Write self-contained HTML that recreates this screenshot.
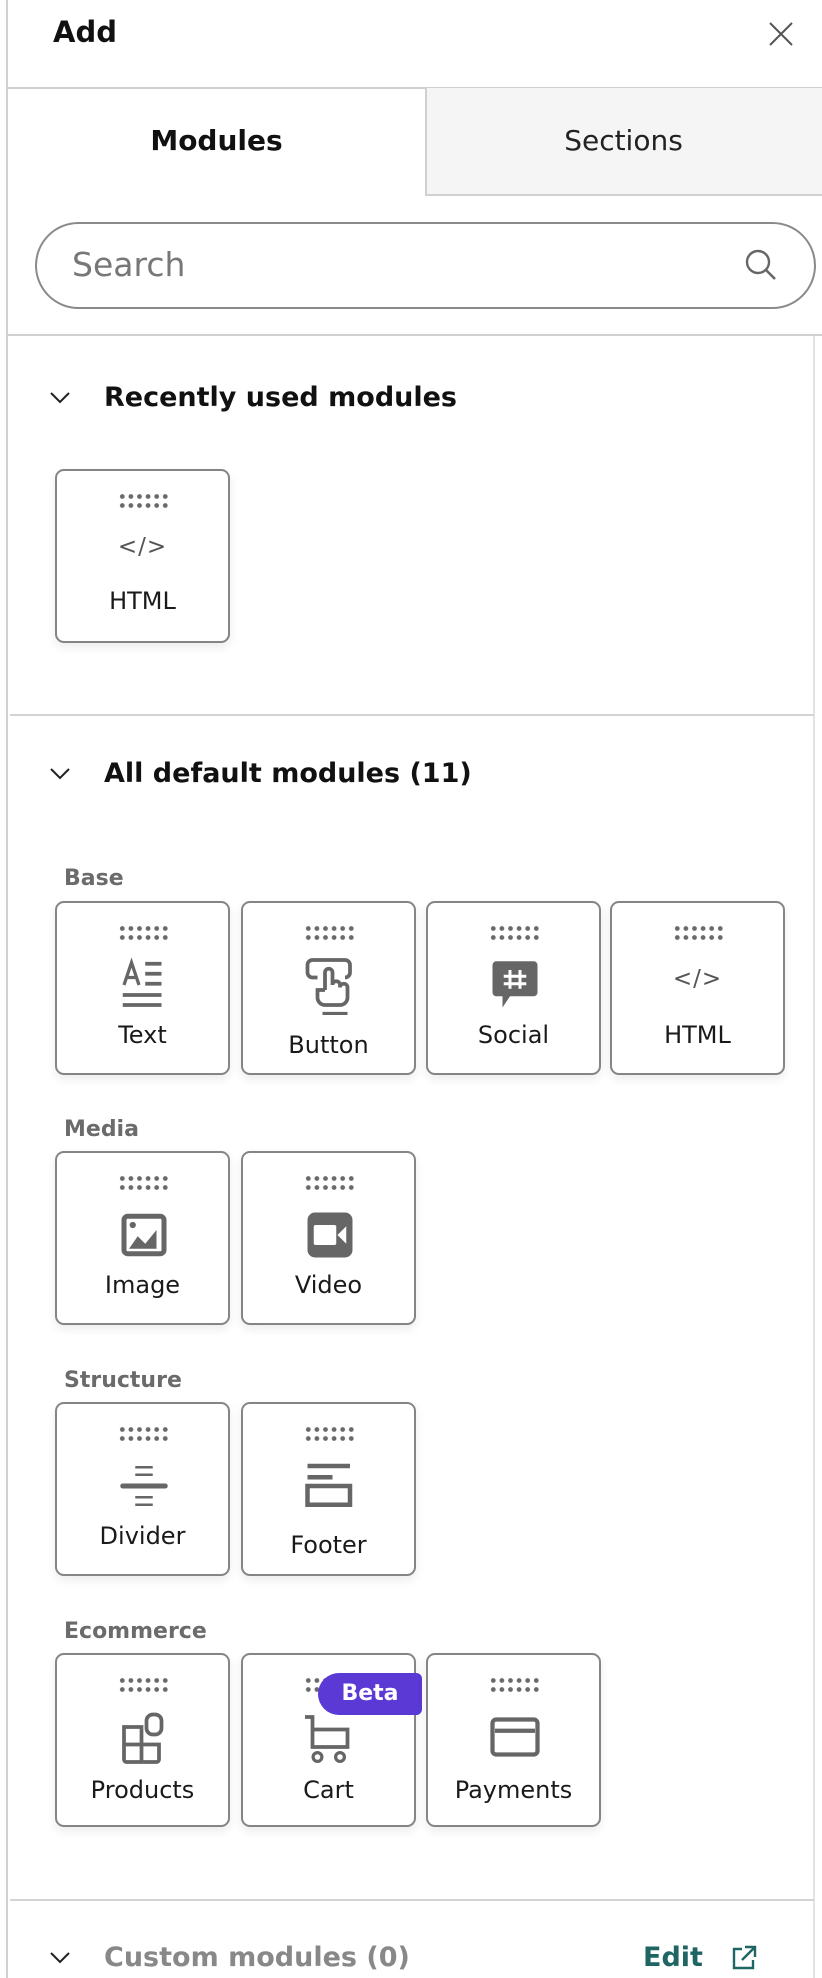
<!DOCTYPE html>
<html><head><meta charset="utf-8"><style>
*{margin:0;padding:0;box-sizing:border-box}
body{width:822px;height:1978px;background:#fff;font-family:"DejaVu Sans","Liberation Sans",sans-serif;position:relative;overflow:hidden;color:#111}
.a{position:absolute}
.card{position:absolute;width:175px;height:174px;border:2px solid #858585;border-radius:9px;background:#fff;box-shadow:0 4px 10px rgba(0,0,0,0.08)}
.dots{position:absolute;left:61px;top:21px;width:52px;height:18px;background-image:radial-gradient(circle,#6a6a6a 2.1px,transparent 2.6px);background-size:8.6px 9px}
.lbl{position:absolute;left:0;right:0;text-align:center;font-size:24px;color:#1a1a1a;line-height:28px}
.ic{position:absolute;left:57px;top:52px;width:60px;height:60px}
.sub{position:absolute;left:64px;font-size:22px;font-weight:bold;color:#6b6b6b}
.hd{position:absolute;left:104px;font-size:27px;font-weight:bold;color:#111}
.chev{position:absolute;left:49px;width:22px;height:14px}
.hr{position:absolute;left:10px;width:804px;height:2px;background:#d3d3d3}
.code{position:absolute;left:0;right:0;top:63px;text-align:center;font-size:23px;color:#555;letter-spacing:1px}
</style></head><body>
<div class="a" style="left:6px;top:0;width:2px;height:1978px;background:#d0d0d0"></div>
<div class="a" style="left:53px;top:15px;font-size:29px;font-weight:bold">Add</div>
<svg class="a" style="left:768px;top:21px" width="26" height="26" viewBox="0 0 26 26"><path d="M2 2L24 24M24 2L2 24" stroke="#555" stroke-width="2"/></svg>
<div class="a" style="left:8px;top:87px;width:814px;height:2px;background:#d0d0d0"></div>
<div class="a" style="left:425px;top:88px;width:397px;height:108px;background:#f5f5f5;border-left:2px solid #d0d0d0;border-bottom:2px solid #d0d0d0"></div>
<div class="a" style="left:8px;top:124px;width:417px;text-align:center;font-size:28px;font-weight:bold">Modules</div>
<div class="a" style="left:425px;top:124px;width:397px;text-align:center;font-size:28px;color:#222">Sections</div>
<div class="a" style="left:35px;top:222px;width:781px;height:87px;border:2px solid #8a8a8a;border-radius:44px"></div>
<div class="a" style="left:72px;top:245px;font-size:33px;color:#777">Search</div>
<svg class="a" style="left:744px;top:248px" width="34" height="34" viewBox="0 0 34 34"><circle cx="14" cy="14" r="11" fill="none" stroke="#666" stroke-width="2.4"/><path d="M22 22L31 31" stroke="#666" stroke-width="2.6"/></svg>
<div class="a" style="left:8px;top:334px;width:814px;height:2px;background:#d0d0d0"></div>
<div class="a" style="left:813px;top:336px;width:2px;height:1642px;background:#e4e4e4"></div>

<svg class="chev" style="top:391px" viewBox="0 0 22 14"><path d="M2 2L11 11L20 2" fill="none" stroke="#222" stroke-width="2"/></svg>
<div class="hd" style="top:382px">Recently used modules</div>
<div class="card" style="left:55px;top:469px"><div class="dots"></div><div class="code">&lt;/&gt;</div><div class="lbl" style="top:116px">HTML</div></div>

<div class="hr" style="top:714px"></div>
<svg class="chev" style="top:767px" viewBox="0 0 22 14"><path d="M2 2L11 11L20 2" fill="none" stroke="#222" stroke-width="2"/></svg>
<div class="hd" style="top:758px">All default modules (11)</div>

<div class="sub" style="top:866px">Base</div>
<div class="card" style="left:55px;top:901px"><div class="dots"></div>
<svg class="ic" viewBox="0 0 48 48"><path d="M8 24L14 6L20 24M10.5 18H17.5" fill="none" stroke="#666" stroke-width="2.6"/><path d="M25 7H38M25 15H38M25 23H38M7 32H38M7 40H38" stroke="#666" stroke-width="3"/></svg>
<div class="lbl" style="top:118px">Text</div></div>
<div class="card" style="left:241px;top:901px"><div class="dots"></div>
<svg class="ic" viewBox="0 0 48 48"><path d="M14 18H10a4 4 0 0 1-4-4V8a4 4 0 0 1 4-4h26a4 4 0 0 1 4 4v6a4 4 0 0 1-4 4" fill="none" stroke="#666" stroke-width="3"/><path d="M20 28V14a3 3 0 0 1 6 0v10a3 3 0 0 1 6 0v2a3 3 0 0 1 6 0v8a6 6 0 0 1-6 6H20a6 6 0 0 1-6-6v-6h6" fill="none" stroke="#666" stroke-width="3"/><path d="M18 47H38" stroke="#666" stroke-width="3"/></svg>
<div class="lbl" style="top:128px">Button</div></div>
<div class="card" style="left:426px;top:901px"><div class="dots"></div>
<svg class="ic" viewBox="0 0 48 48"><path d="M6 8a3 3 0 0 1 3-3h30a3 3 0 0 1 3 3v22a3 3 0 0 1-3 3H20l-6 9V33H9a3 3 0 0 1-3-3z" fill="#666"/><path d="M20 12V27M28 12V27M15 17H33M15 23H33" stroke="#fff" stroke-width="2.4"/></svg>
<div class="lbl" style="top:118px">Social</div></div>
<div class="card" style="left:610px;top:901px"><div class="dots"></div><div class="code">&lt;/&gt;</div><div class="lbl" style="top:118px">HTML</div></div>

<div class="sub" style="top:1117px">Media</div>
<div class="card" style="left:55px;top:1151px"><div class="dots"></div>
<svg class="ic" viewBox="0 0 48 48"><rect x="8" y="9" width="32" height="30" rx="3" fill="none" stroke="#666" stroke-width="4"/><circle cx="15" cy="16" r="2.5" fill="#666"/><path d="M12 35L19 25L25 31L34 20V35z" fill="#666"/></svg>
<div class="lbl" style="top:118px">Image</div></div>
<div class="card" style="left:241px;top:1151px"><div class="dots"></div>
<svg class="ic" viewBox="0 0 48 48"><rect x="6" y="6" width="36" height="36" rx="6" fill="#666"/><rect x="11" y="16" width="18" height="16" rx="1.5" fill="#fff"/><path d="M30 24L37 17V31z" fill="#fff"/></svg>
<div class="lbl" style="top:118px">Video</div></div>

<div class="sub" style="top:1368px">Structure</div>
<div class="card" style="left:55px;top:1402px"><div class="dots"></div>
<svg class="ic" viewBox="0 0 48 48"><path d="M17 9H31M17 15H31M17 33H31M17 39H31" stroke="#666" stroke-width="2"/><path d="M7 24H41" stroke="#666" stroke-width="4" stroke-linecap="round"/></svg>
<div class="lbl" style="top:118px">Divider</div></div>
<div class="card" style="left:241px;top:1402px"><div class="dots"></div>
<svg class="ic" viewBox="0 0 48 48"><path d="M6 8H40M6 17H26" stroke="#666" stroke-width="3.6"/><rect x="6" y="24" width="34" height="15" fill="none" stroke="#666" stroke-width="3.6"/></svg>
<div class="lbl" style="top:127px">Footer</div></div>

<div class="sub" style="top:1619px">Ecommerce</div>
<div class="card" style="left:55px;top:1653px"><div class="dots"></div>
<svg class="ic" viewBox="0 0 48 48"><path d="M8 16H22V44H10a2 2 0 0 1-2-2zM8 30H36M22 30H36V42a2 2 0 0 1-2 2H22" fill="none" stroke="#666" stroke-width="3"/><rect x="26" y="6" width="12" height="16" rx="5" fill="none" stroke="#666" stroke-width="3"/></svg>
<div class="lbl" style="top:121px">Products</div></div>
<div class="card" style="left:241px;top:1653px"><div class="dots"></div>
<svg class="ic" viewBox="0 0 48 48"><path d="M4 8H10V32H38V18H10" fill="none" stroke="#666" stroke-width="3"/><circle cx="14" cy="40" r="3.5" fill="none" stroke="#666" stroke-width="2.6"/><circle cx="32" cy="40" r="3.5" fill="none" stroke="#666" stroke-width="2.6"/></svg>
<div class="lbl" style="top:121px">Cart</div></div>
<div class="a" style="left:318px;top:1673px;width:104px;height:42px;background:#5a39d4;border-radius:22px 6px 6px 22px;color:#fff;font-weight:bold;font-size:22px;text-align:center;line-height:42px">Beta</div>
<div class="card" style="left:426px;top:1653px"><div class="dots"></div>
<svg class="ic" viewBox="0 0 48 48"><rect x="6" y="10" width="36" height="28" rx="3" fill="none" stroke="#666" stroke-width="3.4"/><path d="M8 19H40" stroke="#666" stroke-width="3.4"/></svg>
<div class="lbl" style="top:121px">Payments</div></div>

<div class="hr" style="top:1899px"></div>
<svg class="chev" style="top:1951px" viewBox="0 0 22 14"><path d="M2 2L11 11L20 2" fill="none" stroke="#222" stroke-width="2"/></svg>
<div class="hd" style="top:1942px;color:#888">Custom modules (0)</div>
<div class="a" style="left:643px;top:1942px;font-size:27px;font-weight:bold;color:#1f6563">Edit</div>
<svg class="a" style="left:730px;top:1944px" width="28" height="28" viewBox="0 0 28 28"><path d="M12 5H4V24H23V16" fill="none" stroke="#1f6563" stroke-width="2.4"/><path d="M15 3H25V13M25 3L12 16" fill="none" stroke="#1f6563" stroke-width="2.4"/></svg>
</body></html>
